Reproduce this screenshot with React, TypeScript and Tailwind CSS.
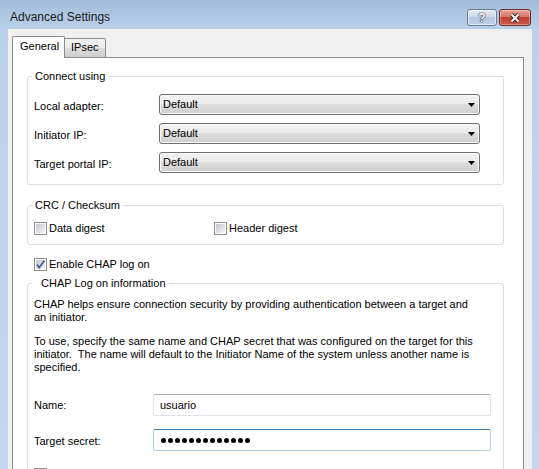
import React from 'react';

function CheckBox({checked = false}: {checked?: boolean}) {
    return (
        <svg width="13" height="13" viewBox="0 0 13 13" className="shrink-0">
            <defs>
                <linearGradient id="cbfill" x1="0" y1="0" x2="1" y2="1">
                    <stop offset="0" stopColor="#c6c9ce" />
                    <stop offset="1" stopColor="#f4f4f4" />
                </linearGradient>
            </defs>
            <rect x="0.5" y="0.5" width="12" height="12" fill="#fff" stroke="#8e8f8f" />
            <rect x="2" y="2" width="9" height="9" fill="url(#cbfill)" />
            {checked && (
                <path d="M3 6.5 L5.2 9.5 L10.5 2.5" fill="none" stroke="#4a5e93" strokeWidth="1.8" />
            )}
        </svg>
    );
}

function Dropdown({value}: {value: string}) {
    return (
        <div className="h-[21px] flex items-center pl-[3px] pr-[4px] border border-[#707070] rounded-[3px] bg-[linear-gradient(#f2f2f2,#ebebeb_50%,#dddddd_50%,#cfcfcf)] shadow-[inset_0_0_0_1px_#fbfbfb]">
            <span className="leading-[15px]">{value}</span>
            <svg width="7" height="4" viewBox="0 0 7 4" className="ml-auto">
                <path d="M0 0 H7 L3.5 4 Z" fill="#000" />
            </svg>
        </div>
    );
}

function TextBox({focused = false, children}: {focused?: boolean; children: React.ReactNode}) {
    const border = focused
        ? 'border-[#b5cfe7] border-t-[#3d7bad]'
        : 'border-[#e2e3ea] border-t-[#abadb3]';
    return (
        <div className={`h-[22px] flex items-center pl-[6px] bg-white border rounded-[2px] ${border}`}>
            {children}
        </div>
    );
}

function TitleBar() {
    return (
        <div className="h-[29px] flex shrink-0">
            <div className="pl-[10px] pt-[10px] leading-[15px] text-[12px] text-[#1b1b1b]">Advanced Settings</div>
            <div className="ml-auto mr-[8px] mt-[9px] flex gap-[2px] h-[17px]">
                <div className="w-[30px] h-[17px] rounded-[3px] border border-[#6b7c95] bg-[linear-gradient(#e2eaf4,#cbd9ea_45%,#b3c8e0_50%,#bdd2ea)] shadow-[inset_0_0_0_1px_rgba(255,255,255,0.55)] flex items-center justify-center">
                    <span className="text-white font-bold text-[12px] leading-none [text-shadow:0_0_1px_#222,0_0_1px_#222,0_0_1px_#222]">?</span>
                </div>
                <div className="w-[32px] h-[17px] rounded-[3px] border border-[#6e2a22] bg-[linear-gradient(#e8a598,#d47566_45%,#c23f2f_50%,#c95a48)] shadow-[inset_0_0_0_1px_rgba(255,255,255,0.35)] flex items-center justify-center">
                    <svg width="12" height="10" viewBox="0 0 12 10">
                        <path d="M2.5 1.5 L9.5 8.5 M9.5 1.5 L2.5 8.5" stroke="#3a2a28" strokeWidth="4" />
                        <path d="M2.5 1.5 L9.5 8.5 M9.5 1.5 L2.5 8.5" stroke="#f4f4f4" strokeWidth="2" />
                    </svg>
                </div>
            </div>
        </div>
    );
}

export default function App() {
    return (
        <div className="w-[539px] h-[469px] overflow-hidden flex flex-col bg-[linear-gradient(#a3bcd8,#bad1ea_30px,#c1d8ef)] font-[family-name:'Liberation_Sans',Arial,sans-serif] text-[11px] text-black">
            <TitleBar />

            <div className="flex-1 ml-[8px] mr-[7px] bg-[#f0f0f0] pl-[4px] pt-[7px]">
                {/* tabs */}
                <div className="flex items-end h-[22px] -mb-px relative z-10">
                    <div className="h-[22px] w-[53px] bg-white border border-b-0 border-[#898c95] rounded-t-[2px] pl-[7px] pt-[2px] leading-[15px]">
                        General
                    </div>
                    <div className="h-[19px] w-[41px] mb-px border border-l-0 border-b-0 border-[#898c95] rounded-tr-[2px] bg-[linear-gradient(#f2f2f2,#ebebeb_50%,#dddddd_50%,#cfcfcf)] pl-[6px] pt-[1px] leading-[15px]">
                        IPsec
                    </div>
                </div>

                <div className="w-[512px] h-[440px] bg-white border border-[#898c95] pl-[14px] pr-[19px] pt-[11px]">
                    <fieldset className="border border-[#d5dfe5] rounded-[3px]">
                        <legend className="ml-[4px] px-[3px] leading-[14px]">Connect using</legend>
                        <div className="grid grid-cols-[125px_321px] gap-y-[8px] pl-[6px] pt-[11px] pb-[11px]">
                            <div className="pt-[5px] leading-[15px]">Local adapter:</div>
                            <Dropdown value="Default" />
                            <div className="pt-[5px] leading-[15px]">Initiator IP:</div>
                            <Dropdown value="Default" />
                            <div className="pt-[5px] leading-[15px]">Target portal IP:</div>
                            <Dropdown value="Default" />
                        </div>
                    </fieldset>

                    <fieldset className="mt-[13px] border border-[#d5dfe5] rounded-[3px]">
                        <legend className="ml-[4px] px-[3px] leading-[14px]">CRC / Checksum</legend>
                        <div className="flex pl-[6px] pt-[10px] pb-[9px]">
                            <label className="w-[180px] flex items-center gap-[2px] h-[13px] leading-[13px]">
                                <CheckBox />
                                <span>Data digest</span>
                            </label>
                            <label className="flex items-center gap-[2px] h-[13px] leading-[13px]">
                                <CheckBox />
                                <span>Header digest</span>
                            </label>
                        </div>
                    </fieldset>

                    <label className="mt-[13px] ml-[7px] flex items-center gap-[2px] h-[13px] leading-[13px]">
                        <CheckBox checked />
                        <span>Enable CHAP log on</span>
                    </label>

                    <fieldset className="mt-[5px] border border-[#d5dfe5] rounded-[3px]">
                        <legend className="ml-[4px] pl-[9px] pr-[3px] leading-[14px]">CHAP Log on information</legend>
                        <div className="pl-[6px] pt-[8px] leading-[13px] whitespace-nowrap">
                            <p>
                                CHAP helps ensure connection security by providing authentication between a target and
                                <br />
                                an initiator.
                            </p>
                            <p className="mt-[11px]">
                                To use, specify the same name and CHAP secret that was configured on the target for this
                                <br />
                                initiator.&nbsp; The name will default to the Initiator Name of the system unless another name is
                                <br />
                                specified.
                            </p>

                            <div className="mt-[20px] grid grid-cols-[119px_338px] gap-y-[13px] items-center">
                                <div className="leading-[15px] pt-px">Name:</div>
                                <TextBox>
                                    <span className="leading-[15px]">usuario</span>
                                </TextBox>
                                <div className="leading-[15px] pt-[3px]">Target secret:</div>
                                <TextBox focused>
                                    <div className="flex gap-[2px] pl-px">
                                        {Array.from({length: 13}).map((_, i) => (
                                            <span key={i} className="w-[5px] h-[5px] rounded-full bg-black" />
                                        ))}
                                    </div>
                                </TextBox>
                            </div>

                            <div className="mt-[17px] h-[13px] flex items-center">
                                <CheckBox />
                            </div>
                        </div>
                    </fieldset>
                </div>
            </div>
        </div>
    );
}
